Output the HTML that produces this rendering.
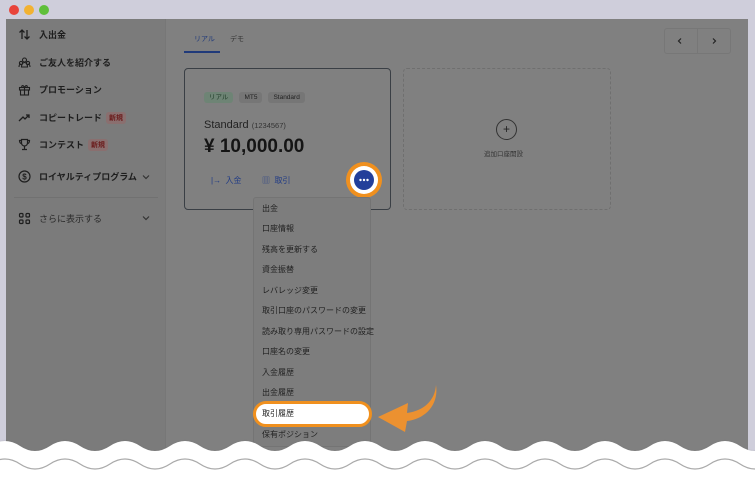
<!DOCTYPE html>
<html><head><meta charset="utf-8"><style>
*{margin:0;padding:0;box-sizing:border-box}
body{width:755px;height:480px;overflow:hidden;background:#cfcedb;font-family:"Liberation Sans","Noto Sans CJK JP",sans-serif;position:relative}
.abs{position:absolute}
.win{left:6px;top:19px;width:742px;height:440px;background:#808080}
.side{left:6px;top:19px;width:160px;height:440px;background:#7b7b7b;border-right:1px solid #777}
.nav{left:18px;font-size:9px;color:#1e1e1e;font-weight:bold;display:flex;align-items:center;gap:8px}
.nav svg{width:13px;height:13px}
.badge{background:#8a6f6f;color:#6a1a1a;font-size:7px;padding:1px 3px;border-radius:3px;margin-left:-4px}
.chev{left:141px;width:10px;height:10px}
.mi{left:262px;font-size:8px;color:#222}
.pill{display:inline-block;font-size:6.5px;height:11px;line-height:11px;padding:0 5px;border-radius:3px;background:#767676;color:#222;vertical-align:top}
</style></head><body>
<div class="abs" style="left:9px;top:5px;width:10px;height:10px;border-radius:50%;background:#e8433a"></div>
<div class="abs" style="left:24px;top:5px;width:10px;height:10px;border-radius:50%;background:#f2b232"></div>
<div class="abs" style="left:39px;top:5px;width:10px;height:10px;border-radius:50%;background:#5fbf3a"></div>
<div class="abs win"></div>
<div class="abs side"></div>

<div class="abs nav" style="top:28px"><svg viewBox="0 0 13 13" fill="none" stroke="#1e1e1e" stroke-width="1.3"><path d="M4 11V2M1.5 4.5L4 2l2.5 2.5M9 2v9M6.5 8.5L9 11l2.5-2.5"/></svg>入出金</div>
<div class="abs nav" style="top:56px"><svg viewBox="0 0 13 13" fill="none" stroke="#1e1e1e" stroke-width="1.1"><circle cx="6.5" cy="4" r="2"/><circle cx="3" cy="7" r="1.6"/><circle cx="10" cy="7" r="1.6"/><path d="M1 11c0-2 1-3 2-3M12 11c0-2-1-3-2-3M3.5 11c0-3 1.5-4.5 3-4.5s3 1.5 3 4.5z"/></svg>ご友人を紹介する</div>
<div class="abs nav" style="top:83px"><svg viewBox="0 0 13 13" fill="none" stroke="#1e1e1e" stroke-width="1.1"><rect x="1.5" y="4.5" width="10" height="2.5"/><rect x="2.5" y="7" width="8" height="5"/><path d="M6.5 4.5V12M6.5 4.5C5 1.5 3 2.5 4 4.5M6.5 4.5C8 1.5 10 2.5 9 4.5"/></svg>プロモーション</div>
<div class="abs nav" style="top:111px"><svg viewBox="0 0 13 13" fill="none" stroke="#1e1e1e" stroke-width="1.3"><path d="M1 10l4-4 2 2 4-4M8 4h3v3"/></svg>コピートレード <span class="badge">新規</span></div>
<div class="abs nav" style="top:138px"><svg viewBox="0 0 13 13" fill="none" stroke="#1e1e1e" stroke-width="1.2"><path d="M3.5 1.5h6v3.5a3 3 0 0 1-6 0zM3.5 2.5H1.5c0 2 1 3 2 3M9.5 2.5h2c0 2-1 3-2 3M6.5 8v3M4 11.5h5"/></svg>コンテスト <span class="badge">新規</span></div>
<div class="abs nav" style="top:170px"><svg viewBox="0 0 13 13" fill="none" stroke="#1e1e1e" stroke-width="1.2"><circle cx="6.5" cy="6.5" r="5.5"/><text x="6.5" y="9.3" font-size="8" text-anchor="middle" fill="#1e1e1e" stroke="none" font-weight="bold">$</text></svg>ロイヤルティプログラム</div>
<svg class="abs chev" style="top:172px" viewBox="0 0 10 10" fill="none" stroke="#333" stroke-width="1.2"><path d="M2 3.5l3 3 3-3"/></svg>
<div class="abs" style="left:14px;top:197px;width:144px;height:1px;background:#717171"></div>
<div class="abs nav" style="top:212px;font-weight:normal;color:#2a2a2a"><svg viewBox="0 0 13 13" fill="none" stroke="#1e1e1e" stroke-width="1.2"><rect x="1.5" y="1.5" width="3.5" height="3.5" rx="1"/><rect x="8" y="1.5" width="3.5" height="3.5" rx="1"/><rect x="1.5" y="8" width="3.5" height="3.5" rx="1"/><rect x="8" y="8" width="3.5" height="3.5" rx="1"/></svg>さらに表示する</div>
<svg class="abs chev" style="top:213px" viewBox="0 0 10 10" fill="none" stroke="#333" stroke-width="1.2"><path d="M2 3.5l3 3 3-3"/></svg>

<div class="abs" style="left:194px;top:34px;font-size:7px;color:#203a7a">リアル</div>
<div class="abs" style="left:230px;top:34px;font-size:7px;color:#333">デモ</div>
<div class="abs" style="left:184px;top:51px;width:36px;height:2px;background:#203a7a"></div>
<div class="abs" style="left:664px;top:28px;width:67px;height:26px;border:1px solid #777;border-radius:3px"></div>
<div class="abs" style="left:697px;top:28px;width:1px;height:26px;background:#777"></div>
<svg class="abs" style="left:676px;top:37px" width="8" height="8" viewBox="0 0 8 8" fill="none" stroke="#222" stroke-width="1.2"><path d="M5 1.5L2.5 4 5 6.5"/></svg>
<svg class="abs" style="left:710px;top:37px" width="8" height="8" viewBox="0 0 8 8" fill="none" stroke="#222" stroke-width="1.2"><path d="M3 1.5L5.5 4 3 6.5"/></svg>

<div class="abs" style="left:184px;top:68px;width:207px;height:142px;border:1.5px solid #3a3f45;border-radius:4px"></div>
<div class="abs" style="left:204px;top:92px;display:flex;gap:6px"><span class="pill" style="background:#6e8475;color:#1e3a26">リアル</span><span class="pill">MT5</span><span class="pill">Standard</span></div>
<div class="abs" style="left:204px;top:119px;font-size:11px;color:#222">Standard <span style="font-size:7.5px;color:#333">(1234567)</span></div>
<div class="abs" style="left:204px;top:136px;font-size:19px;font-weight:bold;color:#151515">¥ 10,000.00</div>
<div class="abs" style="left:211px;top:175px;font-size:8px;color:#1f3a85">|→ &nbsp;入金</div>
<div class="abs" style="left:262px;top:175px;font-size:8px;color:#1f3a85">▥ &nbsp;取引</div>
<div class="abs" style="left:346px;top:162px;width:36px;height:36px;border-radius:50%;background:#f0901e"></div>
<div class="abs" style="left:350px;top:166px;width:28px;height:28px;border-radius:50%;background:#fff"></div>
<svg class="abs" style="left:354px;top:170px" width="20" height="20" viewBox="0 0 20 20"><circle cx="10" cy="10" r="10" fill="#233f9a"/><circle cx="6.5" cy="10" r="1.2" fill="#fff"/><circle cx="10" cy="10" r="1.2" fill="#fff"/><circle cx="13.5" cy="10" r="1.2" fill="#fff"/></svg>

<div class="abs" style="left:403px;top:68px;width:208px;height:142px;border:1px dashed #6f6f6f;border-radius:4px"></div>
<div class="abs" style="left:496px;top:119px;width:21px;height:21px;border:1px solid #333;border-radius:50%;text-align:center;line-height:18px;font-size:12px;color:#222">+</div>
<div class="abs" style="left:484px;top:148px;font-size:6.5px;color:#333">追加口座開設</div>

<div class="abs" style="left:253px;top:197px;width:118px;height:250px;background:#7d7d7d;border:1px solid #747474;border-radius:3px"></div>
<div class="abs mi" style="top:203px">出金</div>
<div class="abs mi" style="top:223px">口座情報</div>
<div class="abs mi" style="top:244px">残高を更新する</div>
<div class="abs mi" style="top:264px">資金振替</div>
<div class="abs mi" style="top:285px">レバレッジ変更</div>
<div class="abs mi" style="top:305px">取引口座のパスワードの変更</div>
<div class="abs mi" style="top:326px">読み取り専用パスワードの設定</div>
<div class="abs mi" style="top:346px">口座名の変更</div>
<div class="abs mi" style="top:367px">入金履歴</div>
<div class="abs mi" style="top:387px">出金履歴</div>
<div class="abs" style="left:253px;top:401px;width:119px;height:26px;border-radius:13px;background:#fff;border:3px solid #f0901e"></div>
<div class="abs mi" style="top:408px">取引履歴</div>
<div class="abs mi" style="top:429px">保有ポジション</div>

<svg class="abs" style="left:375px;top:383px" width="65" height="50" viewBox="0 0 65 50"><path d="M61 2C60 18 48 28 32 30L33 20 3 34l27 15 2-11C50 36 64 22 61 2z" fill="#ec9130"/></svg>

<svg class="abs" style="left:0;top:434px" width="755" height="46" viewBox="0 0 755 46">
<defs><filter id="s"><feDropShadow dx="0" dy="1" stdDeviation="1" flood-color="#666"/></filter></defs>
<path filter="url(#s)" fill="#fff" d="M-10 12 Q5 2 20 12 T50 12 T80 12 T110 12 T140 12 T170 12 T200 12 T230 12 T260 12 T290 12 T320 12 T350 12 T380 12 T410 12 T440 12 T470 12 T500 12 T530 12 T560 12 T590 12 T620 12 T650 12 T680 12 T710 12 T740 12 T770 12 V46 H-10Z"/>
<path fill="none" stroke="#aaa" stroke-width="1.2" d="M-10 30 Q5 20 20 30 T50 30 T80 30 T110 30 T140 30 T170 30 T200 30 T230 30 T260 30 T290 30 T320 30 T350 30 T380 30 T410 30 T440 30 T470 30 T500 30 T530 30 T560 30 T590 30 T620 30 T650 30 T680 30 T710 30 T740 30 T770 30"/>
</svg>
</body></html>
